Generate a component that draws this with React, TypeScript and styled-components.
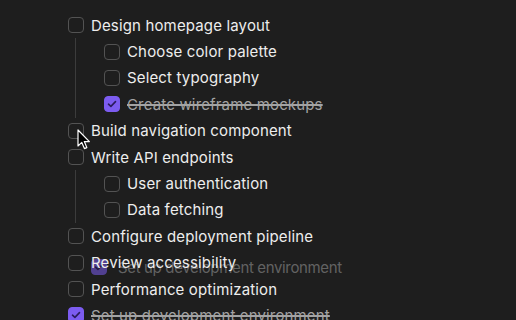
import React from "react";
import styled, { createGlobalStyle } from "styled-components";

const Global = createGlobalStyle`
  html, body { margin: 0; padding: 0; background: #1e1e1e; }
  body { font-family: Inter, "Noto Sans", "Liberation Sans", sans-serif; overflow: hidden; }
  #root { width: 516px; height: 320px; }
`;

const Page = styled.div`
  position: relative;
  width: 516px;
  height: 320px;
  overflow: hidden;
  background: #1e1e1e;
`;

const List = styled.div`
  position: relative;
  z-index: 1;
  display: flex;
  flex-direction: column;
  padding: 12px 0 0 68px;
`;

const Row = styled.div`
  display: flex;
  align-items: center;
  gap: 7px;
  height: 26.4px;
`;

const Box = styled.span<{ $checked?: boolean }>`
  flex: none;
  box-sizing: border-box;
  width: 16px;
  height: 16px;
  border-radius: 4px;
  border: 1.5px solid ${(p) => (p.$checked ? "#7c5cf0" : "#535353")};
  background: ${(p) => (p.$checked ? "#7c5cf0" : "transparent")};
  display: flex;
  align-items: center;
  justify-content: center;
`;

const Label = styled.span<{ $done?: boolean }>`
  font-size: 15px;
  letter-spacing: 0.15px;
  white-space: nowrap;
  color: ${(p) => (p.$done ? "#a3a3a3" : "#ededed")};
  text-decoration: ${(p) => (p.$done ? "line-through" : "none")};
  text-decoration-thickness: 1.5px;
`;

const Children = styled.div`
  display: flex;
  flex-direction: column;
  margin-left: 7px;
  border-left: 1px solid #3c3c3c;
  padding-left: 28px;
`;

const Ghost = styled.div`
  position: absolute;
  z-index: 0;
  left: 91px;
  top: 254px;
  display: flex;
  align-items: center;
  gap: 11px;
  height: 26px;
  opacity: 0.55;
  pointer-events: none;
`;

const GhostLabel = styled.span`
  font-size: 15px;
  color: #9a9a9a;
  white-space: nowrap;
  letter-spacing: -0.35px;
`;

const Cursor = styled.svg`
  position: absolute;
  z-index: 2;
  left: 77px;
  top: 129px;
`;

const Check = () => (
  <svg width="10" height="8" viewBox="0 0 10 8">
    <path d="M1.5 4.2 L3.9 6.4 L8.5 1.6" fill="none" stroke="#2a1b5c" strokeWidth="1.6" strokeLinecap="round" strokeLinejoin="round" />
  </svg>
);

type Item = { text: string; done?: boolean; children?: Item[] };

const items: Item[] = [
  {
    text: "Design homepage layout",
    children: [
      { text: "Choose color palette" },
      { text: "Select typography" },
      { text: "Create wireframe mockups", done: true },
    ],
  },
  { text: "Build navigation component" },
  {
    text: "Write API endpoints",
    children: [{ text: "User authentication" }, { text: "Data fetching" }],
  },
  { text: "Configure deployment pipeline" },
  { text: "Review accessibility" },
  { text: "Performance optimization" },
  { text: "Set up development environment", done: true },
];

const Task = ({ item }: { item: Item }) => (
  <>
    <Row>
      <Box $checked={item.done}>{item.done && <Check />}</Box>
      <Label $done={item.done}>{item.text}</Label>
    </Row>
    {item.children && (
      <Children>
        {item.children.map((c) => (
          <Task key={c.text} item={c} />
        ))}
      </Children>
    )}
  </>
);

export default function App() {
  return (
    <Page>
      <Global />
      <Ghost>
        <Box $checked>
          <Check />
        </Box>
        <GhostLabel>Set up development environment</GhostLabel>
      </Ghost>
      <List>
        {items.map((it) => (
          <Task key={it.text} item={it} />
        ))}
      </List>
      <Cursor width="14" height="22" viewBox="0 0 14 22">
        <path d="M1 1 L1 17 L4.8 13.4 L7.4 19.6 L9.8 18.6 L7.3 12.6 L12.4 12.6 Z" fill="#000" stroke="#fff" strokeWidth="1.2" strokeLinejoin="round" />
      </Cursor>
    </Page>
  );
}
